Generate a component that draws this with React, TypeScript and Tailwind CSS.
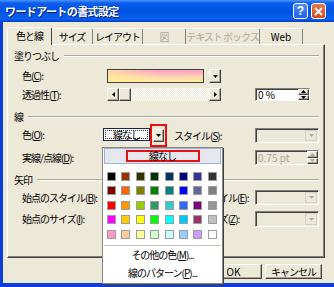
import React from 'react';

const swatches = [
	['bg-[#000000]', 'bg-[#993300]', 'bg-[#333300]', 'bg-[#003300]', 'bg-[#003366]', 'bg-[#000080]', 'bg-[#333399]', 'bg-[#333333]'],
	['bg-[#800000]', 'bg-[#ff6600]', 'bg-[#808000]', 'bg-[#008000]', 'bg-[#008080]', 'bg-[#0000ff]', 'bg-[#666699]', 'bg-[#808080]'],
	['bg-[#ff0000]', 'bg-[#ff9900]', 'bg-[#99cc00]', 'bg-[#339966]', 'bg-[#33cccc]', 'bg-[#3366ff]', 'bg-[#800080]', 'bg-[#969696]'],
	['bg-[#ff00ff]', 'bg-[#ffcc00]', 'bg-[#ffff00]', 'bg-[#00ff00]', 'bg-[#00ffff]', 'bg-[#00ccff]', 'bg-[#993366]', 'bg-[#c0c0c0]'],
	['bg-[#ff99cc]', 'bg-[#ffcc99]', 'bg-[#ffff99]', 'bg-[#ccffcc]', 'bg-[#ccffff]', 'bg-[#99ccff]', 'bg-[#cc99ff]', 'bg-[#ffffff]'],
];

const raised =
	'bg-[#ece9d8] border border-t-white border-l-white border-r-[#404040] border-b-[#404040] shadow-[inset_-1px_-1px_0_#aca899]';
const sunken =
	'border border-t-[#808080] border-l-[#808080] border-r-white border-b-white shadow-[inset_1px_1px_0_#404040]';

function Arrow({ dir = 'down', color = '#000' }: { dir?: 'down' | 'up' | 'left' | 'right'; color?: string }) {
	const d = {
		down: 'M0 0h5L2.5 3z',
		up: 'M0 3h5L2.5 0z',
		left: 'M3 0v5L0 2.5z',
		right: 'M0 0v5L3 2.5z',
	}[dir];
	const vertical = dir === 'down' || dir === 'up';
	return (
		<svg width={vertical ? 5 : 3} height={vertical ? 3 : 5} viewBox={vertical ? '0 0 5 3' : '0 0 3 5'}>
			<path d={d} fill={color} />
		</svg>
	);
}

function U({ children }: { children: React.ReactNode }) {
	return <span className="underline underline-offset-1">{children}</span>;
}

function GroupHeader({ label }: { label: string }) {
	return (
		<div className="flex items-center h-[12px] pl-[6px] pr-[5px]">
			<span>{label}</span>
			<div className="flex-1 ml-[5px] h-[2px] border-t border-t-[#aca899] border-b border-b-white" />
		</div>
	);
}

function DisabledCombo({ h = 'h-[15px]' }: { h?: string }) {
	return (
		<div className={`w-[64px] ${h} ${sunken} bg-[#ece9d8] flex justify-end p-[1px]`}>
			<div className="w-[12px] h-full bg-[#ece9d8] border border-[#d4d0c8] flex items-center justify-center">
				<Arrow color="#aca899" />
			</div>
		</div>
	);
}

function SpinButtons({ color = '#000' }: { color?: string }) {
	return (
		<div className="w-[11px] h-full flex flex-col">
			<div className={`flex-1 ${raised} flex items-center justify-center`}>
				<Arrow dir="up" color={color} />
			</div>
			<div className={`flex-1 ${raised} flex items-center justify-center`}>
				<Arrow dir="down" color={color} />
			</div>
		</div>
	);
}

export default function App() {
	return (
		<div className="w-[334px] h-[287px] bg-[#0b3ed6] flex flex-col relative overflow-hidden font-['Noto_Sans_CJK_JP','Liberation_Sans',sans-serif] text-[10px] leading-[12px] tracking-[-1px] whitespace-nowrap text-black">
			{/* title bar */}
			<div className="h-[22px] shrink-0 flex items-center pl-[5px] pr-[8px] bg-[linear-gradient(to_bottom,#4a95ff_0%,#0b5ded_14%,#0054e3_50%,#0a5ff0_86%,#003fc8_100%)]">
				<span className="text-white font-bold text-[11px] tracking-[-0.6px] [text-shadow:1px_1px_0_#0a1e78]">ワードアートの書式設定</span>
				<div className="ml-auto flex gap-[3px]">
					<div className="w-[15px] h-[16px] rounded-[3px] border border-white bg-[linear-gradient(to_bottom,#4d8ffb,#2360e8)] flex items-center justify-center text-white font-bold text-[12px] tracking-normal font-['Liberation_Sans',sans-serif]">
						?
					</div>
					<div className="w-[15px] h-[16px] rounded-[3px] border border-white bg-[linear-gradient(to_bottom,#e8764f,#d14b22)] flex items-center justify-center">
						<svg width="9" height="9" viewBox="0 0 9 9">
							<path d="M1 1l7 7M8 1L1 8" stroke="#fff" strokeWidth="1.8" />
						</svg>
					</div>
				</div>
			</div>

			{/* body */}
			<div className="flex-1 ml-[3px] mb-[4px] bg-[#ece9d8] flex flex-col">
				{/* tabs */}
				<div className="mt-[4px] ml-[4px] h-[18px] flex items-end">
					<div className="relative z-10 w-[45px] h-[18px] -mb-[1px] bg-[#ece9d8] border-t border-l border-white border-r border-r-[#404040] rounded-t-[2px] flex items-center justify-center pb-[1px]">
						色と線
					</div>
					<div className="w-[41px] h-[16px] border-t border-white border-r border-r-[#808080] rounded-t-[2px] flex items-center justify-center">
						サイズ
					</div>
					<div className="w-[50px] h-[16px] border-t border-white border-r border-r-[#808080] rounded-t-[2px] flex items-center justify-center">
						レイアウト
					</div>
					<div className="w-[43px] h-[16px] border-t border-white border-r border-r-[#808080] rounded-t-[2px] flex items-center justify-center text-[#aca899]">
						図
					</div>
					<div className="w-[74px] h-[16px] border-t border-white border-r border-r-[#808080] rounded-t-[2px] flex items-center justify-center text-[#aca899]">
						テキスト ボックス
					</div>
					<div className="w-[43px] h-[16px] border-t border-white border-r border-r-[#808080] rounded-t-[2px] flex items-center justify-center tracking-normal">
						Web
					</div>
				</div>

				{/* panel */}
				<div className="ml-[4px] w-[318px] h-[214px] border border-t-white border-l-white border-r-[#404040] border-b-[#404040] shadow-[inset_-1px_-1px_0_#808080]">
					<div className="mt-[5px]">
						<GroupHeader label="塗りつぶし" />
					</div>

					<div className="mt-[7px] h-[14px] pl-[14px] flex items-center">
						<span className="w-[85px]">
							色(<U>C</U>):
						</span>
						<div className="w-[97px] h-full border border-[#404040] bg-[linear-gradient(to_right,rgba(255,236,150,0.75),rgba(255,236,150,0)_55%),linear-gradient(to_bottom,#ff9cc8,#ffd8b0_60%,#ffee9a)]" />
						<div className={`ml-[5px] w-[12px] h-full ${raised} flex items-center justify-center`}>
							<Arrow />
						</div>
					</div>

					<div className="mt-[5px] h-[13px] pl-[14px] flex items-center">
						<span className="w-[85px]">
							透過性(<U>T</U>):
						</span>
						<div className="w-[114px] h-full flex">
							<div className={`w-[12px] h-full ${raised} flex items-center justify-center`}>
								<Arrow dir="left" />
							</div>
							<div className={`w-[12px] h-full ${raised}`} />
							<div className="flex-1 h-full bg-[repeating-conic-gradient(#ffffff_0_25%,#ece9d8_0_50%)] bg-[length:2px_2px]" />
							<div className={`w-[12px] h-full ${raised} flex items-center justify-center`}>
								<Arrow dir="right" />
							</div>
						</div>
						<div className={`ml-[34px] w-[55px] h-full bg-white ${sunken} flex items-center pl-[2px] tracking-normal`}>
							<span className="flex-1">0 %</span>
							<SpinButtons />
						</div>
					</div>

					<div className="mt-[10px]">
						<GroupHeader label="線" />
					</div>

					<div className="mt-[5px] h-[15px] pl-[14px] flex items-start">
						<span className="w-[81px] h-[13px] flex items-center">
							色(<U>O</U>):
						</span>
						<div className="w-[47px] h-[13px] bg-white border border-[#1a2450] p-[1px]">
							<div className="w-full h-full border border-dotted border-[#333] flex items-center justify-center">
								線なし
							</div>
						</div>
						<div className="-mt-[4px] w-[17px] h-[23px] border-2 border-[#e81010] flex items-center justify-center">
							<div className={`w-[11px] h-[13px] ${raised} flex items-center justify-center`}>
								<Arrow />
							</div>
						</div>
						<span className="ml-[7px] w-[81px] h-[15px] flex items-center">
							スタイル(<U>S</U>):
						</span>
						<DisabledCombo />
					</div>

					<div className="mt-[7px] h-[15px] pl-[14px] flex items-center">
						<span className="w-[233px]">
							実線/点線(<U>D</U>):
						</span>
						<div className={`w-[64px] h-full ${sunken} bg-[#ece9d8] flex items-center pl-[2px] text-[#aca899] tracking-normal`}>
							<span className="flex-1">0.75 pt</span>
							<SpinButtons color="#aca899" />
						</div>
					</div>

					<div className="mt-[9px]">
						<GroupHeader label="矢印" />
					</div>

					<div className="mt-[4px] h-[15px] pl-[14px] flex items-center">
						<span className="w-[152px]">
							始点のスタイル(<U>B</U>):
						</span>
						<span className="w-[81px]">
							終点のスタイル(<U>E</U>):
						</span>
						<DisabledCombo />
					</div>

					<div className="mt-[6px] h-[16px] pl-[14px] flex items-center">
						<span className="w-[152px]">
							始点のサイズ(<U>I</U>):
						</span>
						<span className="w-[81px]">
							終点のサイズ(<U>Z</U>):
						</span>
						<DisabledCombo h="h-[16px]" />
					</div>
				</div>

				{/* buttons */}
				<div className="mt-[6px] pr-[12px] flex justify-end gap-[3px]">
					<div className={`w-[57px] h-[15px] ${raised} flex items-center justify-center tracking-normal`}>OK</div>
					<div className={`w-[57px] h-[15px] ${raised} flex items-center justify-center`}>キャンセル</div>
				</div>
			</div>

			{/* colour dropdown */}
			<div className="absolute left-[102px] top-[147px] w-[121px] h-[137px] bg-white border border-[#8a867a] shadow-[1px_1px_0_#404040] flex flex-col">
				<div className="mx-[1px] h-[16px] border border-[#9db4dc] bg-[#e6e8ee] flex items-center justify-center">
					<div className="w-[74px] h-[12px] border-2 border-[#e81010] flex items-center justify-center">線なし</div>
				</div>
				<div className="mt-[8px] pl-[4px] grid grid-cols-[repeat(8,9px)] gap-[5.4px]">
					{swatches.flat().map((c, i) => (
						<div key={i} className={`w-[9px] h-[9px] border border-[#9d9d9d] ${c}`} />
					))}
				</div>
				<div className="mt-[6px] mx-[1px] h-px bg-[#c5c2b8]" />
				<div className="h-[18px] flex items-center justify-center">
					その他の色(<U>M</U>)...
				</div>
				<div className="h-[18px] flex items-center justify-center">
					線のパターン(<U>P</U>)...
				</div>
			</div>
		</div>
	);
}
